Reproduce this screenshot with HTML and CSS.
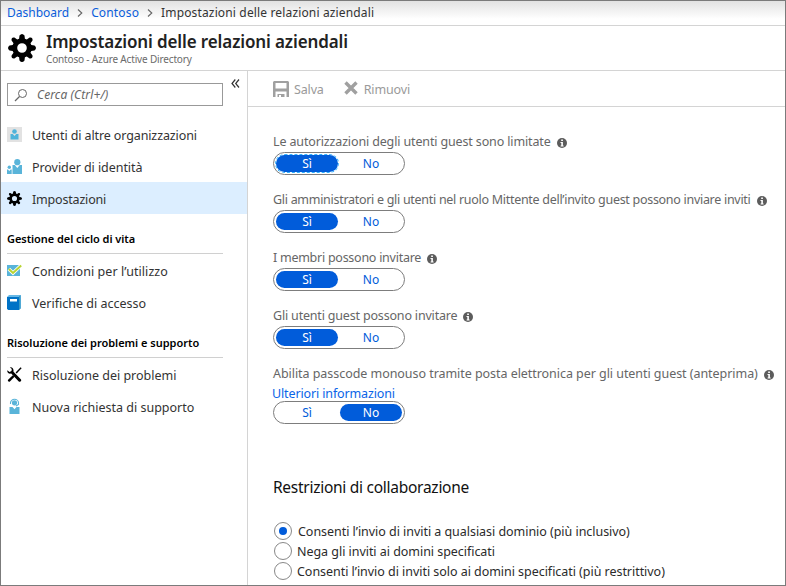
FILE: index.html
```html
<!DOCTYPE html>
<html lang="it">
<head>
<meta charset="utf-8">
<title>Impostazioni delle relazioni aziendali</title>
<link rel="stylesheet" href="styles.css">
</head>
<body>
<svg class="defs" aria-hidden="true">
  <symbol id="gear" viewBox="0 0 28 28">
    <path fill-rule="evenodd" d="M11.500 1.500Q14-1.500 16.500 1.500L16.900 4.700L18.800 5.500L21.600 3.600Q25 3 24.500 6.400L22.500 9.200L23.300 11.100L26.500 11.500Q29.500 14 26.500 16.500L23.300 16.900L22.500 18.800L24.500 21.600Q25 25 21.600 24.500L18.800 22.500L16.900 23.300L16.500 26.500Q14 29.500 11.500 26.500L11.100 23.300L9.200 22.500L6.400 24.500Q3 25 3.600 21.600L5.500 18.800L4.700 16.900L1.500 16.500Q-1.500 14 1.500 11.500L4.700 11.100L5.500 9.200L3.600 6.400Q3 3 6.400 3.600L9.200 5.500L11.100 4.700ZM14 9.200A4.800 4.800 0 1 0 14 18.800A4.800 4.800 0 1 0 14 9.200Z"/>
  </symbol>
  <symbol id="info" viewBox="0 0 10 10">
    <circle cx="5" cy="5" r="5" fill="#5c5c5c"/>
    <path d="M4.200 1.500h1.700v1.500H4.200zM3.500 4h2.400v3.500h.7v1h-3v-1h.7V5h-.8z" fill="#fff"/>
  </symbol>
  <symbol id="chevron" viewBox="0 0 6 8"><path d="M1 .5L4.800 4L1 7.500" fill="none" stroke="#666" stroke-width="1.100"/></symbol>
</svg>
<div class="window">
  <nav class="crumbs">
    <a class="c1">Dashboard</a><svg class="chev"><use href="#chevron"/></svg>
    <a class="c2">Contoso</a><svg class="chev"><use href="#chevron"/></svg>
    <span class="c3">Impostazioni delle relazioni aziendali</span>
  </nav>
  <header class="head">
    <svg class="head-icon"><use href="#gear"/></svg>
    <div class="head-text">
      <h1>Impostazioni delle relazioni aziendali</h1>
      <p>Contoso - Azure Active Directory</p>
    </div>
  </header>
  <div class="body">
    <aside class="side">
      <div class="search-row">
        <div class="search">
          <svg viewBox="0 0 14 14"><circle cx="8.500" cy="5.500" r="4" fill="none" stroke="#666"/><path d="M5.500 8.500L1 13" stroke="#666" stroke-width="1.200"/></svg>
          <span>Cerca (Ctrl+/)</span>
        </div>
        <svg class="collapse" viewBox="0 0 9 9"><path d="M4.300.5L1 4.500L4.300 8.500M8 .5L4.700 4.500L8 8.500" fill="none" stroke="#333" stroke-width="1.200"/></svg>
      </div>
      <ul class="menu">
        <li><svg viewBox="0 0 15 15"><path d="M0 0h15v15H0z" fill="#e2e2e2"/><circle cx="7.500" cy="4.500" r="2.300" fill="#4fb3da"/><path d="M3.500 7h2.300l1.700 2 1.700-2h2.300v5.500h-8z" fill="#4fb3da"/></svg><span class="m1">Utenti di altre organizzazioni</span></li>
        <li><svg viewBox="0 0 15 15"><circle cx="10.300" cy="3.200" r="3.100" fill="#59b4d9"/><path d="M5.500 6h2.300l2.500 3 2.500-3H15v9H5.500z" fill="#59b4d9"/><circle cx="2.300" cy="8.300" r="1.700" fill="#59b4d9"/><path d="M0 10.500h1l1.300 1.500 1.400-1.500h1V15H0z" fill="#59b4d9"/></svg><span class="m2">Provider di identità</span></li>
        <li class="selected"><svg><use href="#gear"/></svg><span class="m3">Impostazioni</span></li>
      </ul>
      <h2 class="g1">Gestione del ciclo di vita</h2>
      <ul class="menu">
        <li><svg viewBox="0 0 15 15"><path d="M0 2h13v11H0z" fill="#59b4d9"/><path d="M1.800 6L6 10L14 2.500" fill="none" stroke="#fff" stroke-width="3.600"/><path d="M1.800 6L6 10L14.200 2.500" fill="none" stroke="#b8d432" stroke-width="2"/></svg><span class="m4">Condizioni per l’utilizzo</span></li>
        <li><svg viewBox="0 0 15 15"><path d="M2 0h12v13l-2 2H1L0 2z" fill="#68b8e5"/><path d="M0 2h12v13H1.500L0 14z" fill="#0072c6"/><path d="M12 1l1.500-.6v13L12 15z" fill="#3999c6"/><path d="M3 4h7v2.500H3z" fill="#fff"/></svg><span class="m5">Verifiche di accesso</span></li>
      </ul>
      <h2 class="g2">Risoluzione dei problemi e supporto</h2>
      <ul class="menu">
        <li><svg viewBox="0 0 15 15"><path d="M2.800.3l2 1.800-.3 2L2.500 5 .3 3.200C0 5.500 1.800 7.300 4.200 6.600l7.300 7.600c1.500 1.500 3.700-.5 2.300-2L6.500 4.800C7 2 5.500 0 2.800.3z"/><path d="M13.600.2l1 1L9.700 6.500 8.600 5.500z"/><path d="M5.800 8.200l1.700 1.600-4.600 4.700c-1 1-2.800-.6-1.800-1.700z"/></svg><span class="m6">Risoluzione dei problemi</span></li>
        <li><svg viewBox="0 0 15 15"><circle cx="7.500" cy="3.800" r="2.600" fill="#59b4d9"/><path d="M3.500 5V3.800a4 3.500 0 0 1 8 0V5.500L9 7" fill="none" stroke="#59b4d9" stroke-width="1.100"/><path d="M2.500 8h3l2 2.300 2-2.300h3v7h-10z" fill="#59b4d9"/></svg><span class="m7">Nuova richiesta di supporto</span></li>
      </ul>
    </aside>
    <main class="main">
      <div class="tools">
        <svg class="save" viewBox="0 0 16 16"><path fill-rule="evenodd" d="M1 0h14l1 1v15h-2.500v-5.500h-11V16H0V1zM2.500 2v5.500h11V2z" fill="#a0a0a0"/><path d="M4.500 13h7v3H8v-2H6v2H4.500z" fill="#a0a0a0"/></svg><span class="t1">Salva</span>
        <svg class="remove" viewBox="0 0 14 14"><path d="M1.500 1.500l11 11M12.500 1.500l-11 11" stroke="#a0a0a0" stroke-width="3.400"/></svg><span class="t2">Rimuovi</span>
      </div>
      <div class="form">
        <section class="field"><label><span class="l1">Le autorizzazioni degli utenti guest sono limitate</span><svg><use href="#info"/></svg></label>
          <div class="toggle"><b class="focus">Sì</b><i>No</i></div></section>
        <section class="field"><label><span class="l2">Gli amministratori e gli utenti nel ruolo Mittente dell’invito guest possono inviare inviti</span><svg><use href="#info"/></svg></label>
          <div class="toggle"><b>Sì</b><i>No</i></div></section>
        <section class="field"><label><span class="l3">I membri possono invitare</span><svg><use href="#info"/></svg></label>
          <div class="toggle"><b>Sì</b><i>No</i></div></section>
        <section class="field"><label><span class="l4">Gli utenti guest possono invitare</span><svg><use href="#info"/></svg></label>
          <div class="toggle"><b>Sì</b><i>No</i></div></section>
        <section class="field last"><label><span class="l5">Abilita passcode monouso tramite posta elettronica per gli utenti guest (anteprima)</span><svg><use href="#info"/></svg></label>
          <a class="more">Ulteriori informazioni</a>
          <div class="toggle"><i>Sì</i><b>No</b></div></section>
        <h3>Restrizioni di collaborazione</h3>
        <div class="radio on"><em></em><span class="r1">Consenti l’invio di inviti a qualsiasi dominio (più inclusivo)</span></div>
        <div class="radio"><em></em><span class="r2">Nega gli inviti ai domini specificati</span></div>
        <div class="radio"><em></em><span class="r3">Consenti l’invio di inviti solo ai domini specificati (più restrittivo)</span></div>
      </div>
    </main>
  </div>
</div>
</body>
</html>
```
FILE: styles.css
```css
* { box-sizing: border-box; }
body { margin: 0; font-family: "Noto Sans", sans-serif; font-size: 12.5px; color: #333; white-space: nowrap; }
h1, h2, h3, p, ul { margin: 0; padding: 0; font-weight: 400; list-style: none; }
svg { flex: none; overflow: visible; }
.defs { display: none; }
.window { width: 786px; height: 586px; border: 1px solid #7b7b7b; background: #fff; display: flex; flex-direction: column; overflow: hidden; }
.crumbs { height: 25px; border-bottom: 1px solid #d4d4d4; background: linear-gradient(#e2e2e2, #fff 75%); display: flex; align-items: center; padding: 0 0 2px 6px; font-size: 12px; }
.crumbs a { color: #0a5edb; }
.c2 { letter-spacing: .15px; }
.c3 { letter-spacing: .15px; }
.chev { width: 6px; height: 8px; margin: 1px 8px 0; }
.head { height: 45px; border-bottom: 1px solid #d4d4d4; display: flex; padding-left: 7px; }
.head-icon { width: 28px; height: 28px; margin-top: 8px; }
.head-text { margin-left: 10px; }
h1 { font-size: 17px; font-weight: 600; line-height: 24px; height: 26px; padding-top: 4px; color: #222; letter-spacing: -.12px; }
.head p { font-size: 10px; line-height: 14px; color: #6b6b6b; letter-spacing: -.16px; }
.body { flex: 1; display: flex; min-height: 0; }
.side { flex: none; width: 247px; border-right: 1px solid #d4d4d4; }
.search-row { display: flex; padding: 12px 0 0 6px; height: 47px; }
.search { flex: none; width: 216px; height: 23px; border: 1px solid #999; display: flex; align-items: center; color: #666; font-style: italic; font-size: 12px; padding-left: 6px; }
.search svg { width: 14px; height: 14px; margin-right: 9px; }
.search span { letter-spacing: .1px; }
.collapse { width: 9px; height: 9px; margin: -4px 0 0 8px; }
.menu li { height: 32px; display: flex; align-items: center; padding: 2px 0 0 6px; }
.menu svg { width: 15px; height: 15px; margin-right: 10px; margin-top: -2px; }
.menu .selected { background: #dceeff; }
.m1 { letter-spacing: -.11px; }
.m2 { letter-spacing: -.06px; }
.m3 { letter-spacing: -.18px; }
.m4 { letter-spacing: .06px; }
h2 { width: 216px; margin-left: 6px; height: 40px; border-bottom: 1px solid #d0d0d0; font-weight: 600; font-size: 11px; color: #000; line-height: 16px; padding-top: 17px; letter-spacing: -.06px; }
h2.g2 { letter-spacing: -.02px; }
.main { flex: 1; min-width: 0; }
.tools { height: 36px; border-bottom: 1px solid #d4d4d4; display: flex; align-items: center; padding-left: 25px; color: #9a9a9a; letter-spacing: -.15px; }
.tools span { padding-top: 2px; }
.save { width: 16px; height: 16px; margin-right: 5px; }
.remove { width: 14px; height: 14px; margin: -2px 6px 0 20px; }
.form { padding: 25px 0 0 25px; color: #666; }
.field { height: 58px; }
.field label { display: flex; align-items: center; height: 20px; padding-bottom: 1px; }
.field label svg { width: 10px; height: 10px; margin: 3px 0 0 6px; }
.l1 { letter-spacing: -.14px; }
.l2 { letter-spacing: -.29px; }
.l3 { letter-spacing: -.26px; }
.l4 { letter-spacing: -.18px; }
.l5 { letter-spacing: -.05px; }
.toggle { width: 132px; height: 23px; border: 1px solid #7d7d7d; border-radius: 12px; display: flex; padding: 2px; gap: 2px; line-height: 17px; text-align: center; font-size: 12px; }
.toggle b, .toggle i { width: 62px; height: 17px; border-radius: 9px; font-style: normal; font-weight: 400; }
.toggle b { background: #015cda; color: #fff; }
.toggle i { color: #015cda; }
.toggle .focus { outline: 1px dashed #35b4ff; }
.last { height: 112px; }
.last label { height: 19px; }
.more { display: block; height: 18px; line-height: 21px; margin-left: -1px; color: #0a64e8; letter-spacing: -.13px; }
h3 { font-size: 15.500px; line-height: 22px; color: #111; height: 45px; letter-spacing: -.27px; }
.radio { display: flex; align-items: center; height: 20px; color: #2b2b2b; }
.radio em { width: 18px; height: 18px; border: 1px solid #888; border-radius: 50%; margin: 0 5px 0 1px; display: grid; place-items: center; }
.radio span { letter-spacing: -.04px; }
.radio .r1 { margin-left: 1px; }
.on em::after { content: ""; width: 8px; height: 8px; border-radius: 50%; background: #015cda; }
```
